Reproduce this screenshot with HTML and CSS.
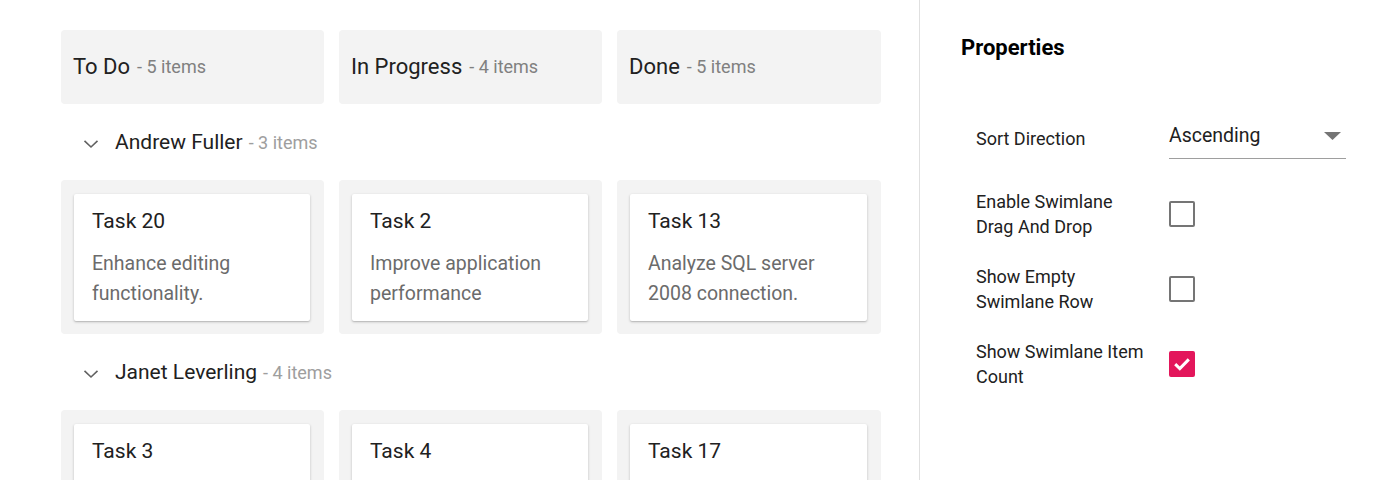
FILE: index.html
```html
<!DOCTYPE html>
<html>
<head>
<meta charset="utf-8">
<link rel="stylesheet" href="styles.css">
</head>
<body>
<div class="layout">
  <main class="board">
    <div class="headers">
      <div class="col-head"><span class="col-title">To Do</span><span class="count">- 5 items</span></div>
      <div class="col-head"><span class="col-title">In Progress</span><span class="count">- 4 items</span></div>
      <div class="col-head"><span class="col-title">Done</span><span class="count">- 5 items</span></div>
    </div>

    <div class="lane-head">
      <svg class="chev" width="16" height="10" viewBox="0 0 16 10"><path d="M1.5 1.8 L8 8 L14.5 1.8" fill="none" stroke="#616161" stroke-width="1.6"/></svg>
      <span class="lane-name">Andrew Fuller</span><span class="lane-count">- 3 items</span>
    </div>
    <div class="lane-row">
      <div class="cell"><div class="card"><div class="card-title">Task 20</div><div class="card-desc">Enhance editing functionality.</div></div></div>
      <div class="cell"><div class="card"><div class="card-title">Task 2</div><div class="card-desc">Improve application performance</div></div></div>
      <div class="cell"><div class="card"><div class="card-title">Task 13</div><div class="card-desc">Analyze SQL server 2008 connection.</div></div></div>
    </div>

    <div class="lane-head">
      <svg class="chev" width="16" height="10" viewBox="0 0 16 10"><path d="M1.5 1.8 L8 8 L14.5 1.8" fill="none" stroke="#616161" stroke-width="1.6"/></svg>
      <span class="lane-name">Janet Leverling</span><span class="lane-count">- 4 items</span>
    </div>
    <div class="lane-row">
      <div class="cell"><div class="card"><div class="card-title">Task 3</div><div class="card-desc">Fix the issues reported by the customer.</div></div></div>
      <div class="cell"><div class="card"><div class="card-title">Task 4</div><div class="card-desc">Add responsive support to application</div></div></div>
      <div class="cell"><div class="card"><div class="card-title">Task 17</div><div class="card-desc">Fix the issues reported in the IE browser.</div></div></div>
    </div>
  </main>

  <aside class="props">
    <h2 class="props-title">Properties</h2>
    <div class="prop-list">
      <div class="prop-row sort-row">
        <div class="prop-label">Sort Direction</div>
        <div class="dropdown"><span>Ascending</span><svg width="17" height="8" viewBox="0 0 17 8"><path d="M0 0 H17 L8.5 8 Z" fill="#757575"/></svg></div>
      </div>
      <div class="prop-row check-row">
        <div class="prop-label">Enable Swimlane<br>Drag And Drop</div>
        <div class="checkbox"></div>
      </div>
      <div class="prop-row check-row">
        <div class="prop-label">Show Empty<br>Swimlane Row</div>
        <div class="checkbox"></div>
      </div>
      <div class="prop-row check-row">
        <div class="prop-label">Show Swimlane Item<br>Count</div>
        <div class="checkbox checked"><svg width="18" height="14" viewBox="0 0 18 14"><path d="M2.2 7.2 L6.8 11.6 L15.8 2.4" fill="none" stroke="#fff" stroke-width="3"/></svg></div>
      </div>
    </div>
  </aside>
</div>
</body>
</html>
```

FILE: styles.css
```css
* { box-sizing: border-box; }
html, body { margin: 0; padding: 0; background: #fff; }
body {
  font-family: Roboto, "Liberation Sans", sans-serif;
  color: #212121;
  width: 1390px;
  height: 480px;
  overflow: hidden;
}
.layout {
  display: flex;
  height: 480px;
}
.board {
  width: 920px;
  flex: none;
  padding: 30px 38px 0 61px;
  border-right: 1px solid #e0e0e0;
  overflow: hidden;
}
.headers {
  display: grid;
  grid-template-columns: 263px 263px 264px;
  column-gap: 15px;
}
.col-head {
  height: 74px;
  background: #f3f3f3;
  border-radius: 4px;
  display: flex;
  align-items: center;
  padding-left: 12px;
  padding-bottom: 2px;
}
.col-title {
  font-size: 22px;
  color: #212121;
}
.count {
  font-size: 18px;
  color: #808080;
  margin-left: 7px;
}
.lane-head {
  height: 76px;
  display: flex;
  align-items: center;
  padding-left: 22px;
}
.chev { margin-right: 16px; margin-top: 3px; }
.lane-name { font-size: 21px; color: #212121; }
.lane-count { font-size: 18px; color: #9e9e9e; margin-left: 6px; }
.lane-row {
  display: grid;
  grid-template-columns: 263px 263px 264px;
  column-gap: 15px;
}
.cell {
  background: #f3f3f3;
  border-radius: 4px;
  padding: 14px 14px 13px 13px;
}
.card {
  background: #fff;
  border-radius: 2px;
  box-shadow: 0 1px 3px rgba(0,0,0,0.2), 0 1px 1px rgba(0,0,0,0.1);
  padding: 13px 18px 12px 18px;
  height: 127px;
  overflow: hidden;
}
.card-title {
  font-size: 21px;
  line-height: 28px;
  color: #212121;
}
.card-desc {
  margin-top: 14px;
  font-size: 19.5px;
  line-height: 30px;
  color: #6b6b6b;
}
.props {
  flex: 1;
  padding: 34px 44px 0 41px;
}
.props-title {
  margin: 0;
  font-size: 22px;
  font-weight: 700;
  line-height: 28px;
  color: #000;
}
.prop-list {
  margin-top: 47px;
  padding-left: 15px;
}
.prop-row {
  display: grid;
  grid-template-columns: 193px 1fr;
  align-items: center;
}
.sort-row { height: 67px; align-items: start; }
.check-row { height: 75px; }
.prop-label {
  font-size: 18px;
  line-height: 25px;
  color: #212121;
}
.sort-row .prop-label { padding-top: 17px; }
.dropdown {
  display: flex;
  align-items: center;
  justify-content: space-between;
  border-bottom: 1px solid #9e9e9e;
  height: 50px;
  padding: 4px 5px 0 0;
  font-size: 19.5px;
  color: #212121;
}
.checkbox {
  width: 26px;
  height: 26px;
  border: 2.5px solid #757575;
  border-radius: 2px;
  display: flex;
  align-items: center;
  justify-content: center;
}
.checkbox.checked {
  background: #e3165b;
  border-color: #e3165b;
}
```
